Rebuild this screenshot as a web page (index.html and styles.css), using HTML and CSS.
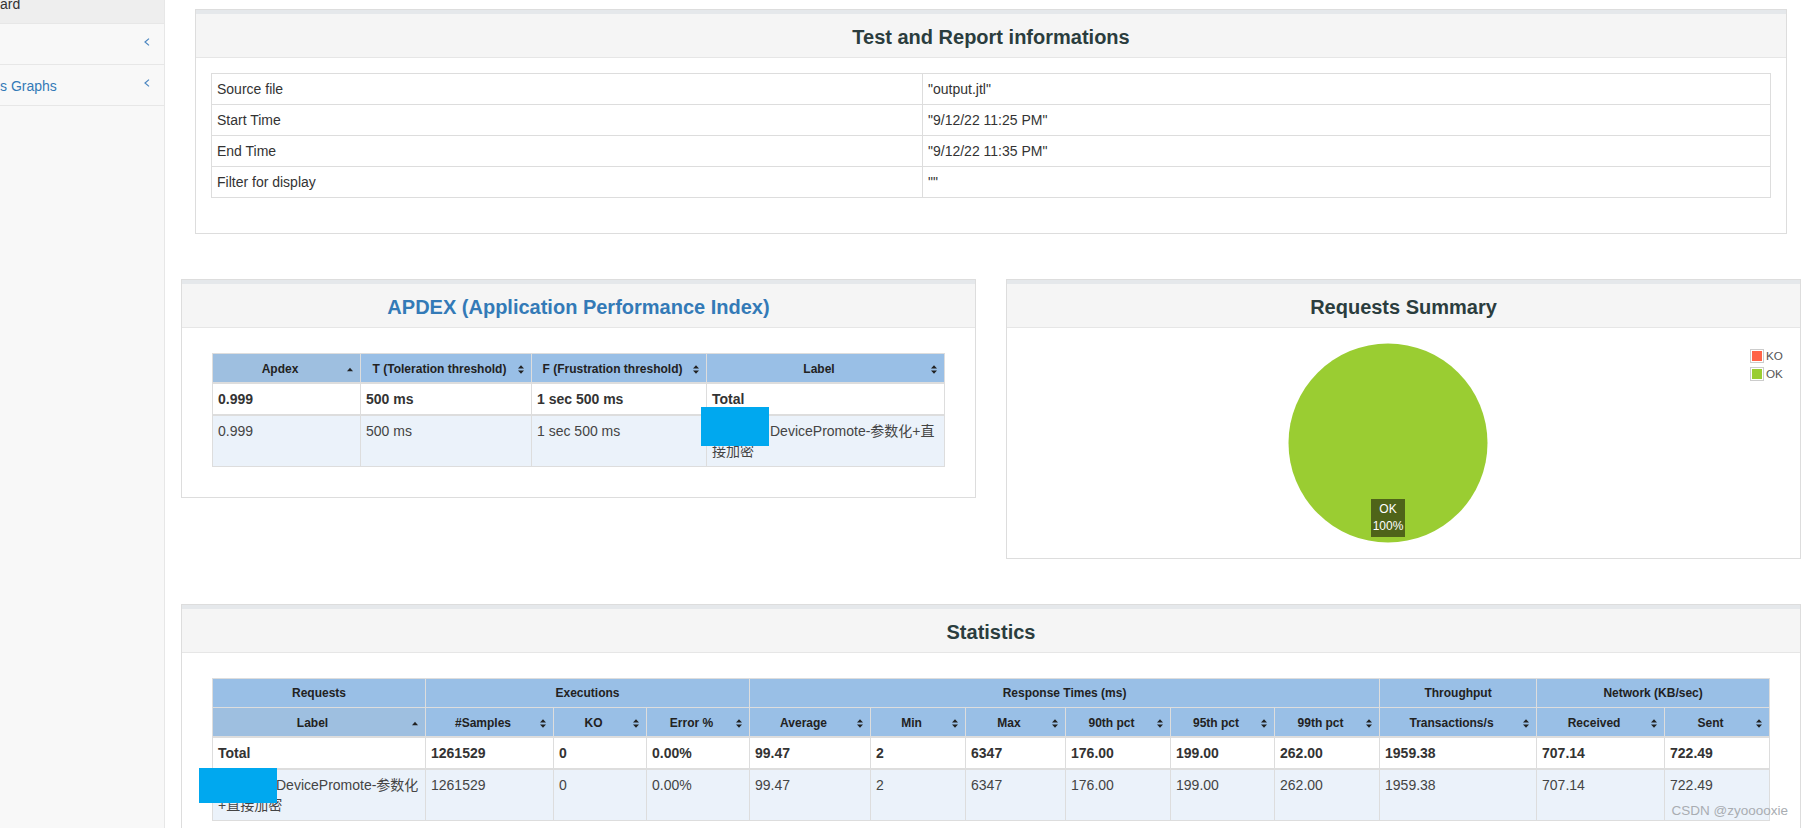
FILE: index.html
```html
<!DOCTYPE html>
<html lang="en">
<head>
<meta charset="utf-8">
<title>Apache JMeter Dashboard</title>
<link rel="stylesheet" href="styles.css">
</head>
<body>
<div class="wrapper">
  <nav class="sidebar">
    <ul class="side-nav">
      <li class="side-item active"><a class="side-link" href="#"><span class="side-text">ard</span></a></li>
      <li class="side-item"><a class="side-link" href="#"><span class="side-text"></span><svg class="chev" width="6" height="8" viewBox="0 0 6 8"><polyline points="5,0.6 1,4 5,7.4"/></svg></a></li>
      <li class="side-item"><a class="side-link" href="#"><span class="side-text">s Graphs</span><svg class="chev" width="6" height="8" viewBox="0 0 6 8"><polyline points="5,0.6 1,4 5,7.4"/></svg></a></li>
    </ul>
  </nav>

  <main class="page">
    <section class="panel panel-info">
      <div class="panel-heading"><h2 class="panel-title">Test and Report informations</h2></div>
      <div class="panel-body">
        <table class="tbl info">
          <colgroup><col class="ci-1"><col class="ci-2"></colgroup>
          <tbody>
            <tr><td>Source file</td><td>"output.jtl"</td></tr>
            <tr><td>Start Time</td><td>"9/12/22 11:25 PM"</td></tr>
            <tr><td>End Time</td><td>"9/12/22 11:35 PM"</td></tr>
            <tr><td>Filter for display</td><td>""</td></tr>
          </tbody>
        </table>
      </div>
    </section>

    <div class="row">
      <section class="panel panel-apdex">
        <div class="panel-heading"><h2 class="panel-title link">APDEX (Application Performance Index)</h2></div>
        <div class="panel-body">
          <table class="tbl apdex">
            <colgroup><col class="ca-1"><col class="ca-2"><col class="ca-3"><col class="ca-4"></colgroup>
            <thead>
              <tr>
                <th class="sorted"><div class="th-in"><span>Apdex</span><svg class="sort" width="6" height="9" viewBox="0 0 6 9"><path d="M0 6.2L3 2.8L6 6.2Z"/></svg></div></th>
                <th><div class="th-in"><span>T (Toleration threshold)</span><svg class="sort" width="6" height="9" viewBox="0 0 6 9"><path d="M0 3.6L3 0.2L6 3.6Z M0 5.4L6 5.4L3 8.8Z"/></svg></div></th>
                <th><div class="th-in"><span>F (Frustration threshold)</span><svg class="sort" width="6" height="9" viewBox="0 0 6 9"><path d="M0 3.6L3 0.2L6 3.6Z M0 5.4L6 5.4L3 8.8Z"/></svg></div></th>
                <th><div class="th-in"><span>Label</span><svg class="sort" width="6" height="9" viewBox="0 0 6 9"><path d="M0 3.6L3 0.2L6 3.6Z M0 5.4L6 5.4L3 8.8Z"/></svg></div></th>
              </tr>
            </thead>
            <tbody class="total">
              <tr><td>0.999</td><td>500 ms</td><td>1 sec 500 ms</td><td>Total</td></tr>
            </tbody>
            <tbody class="items">
              <tr><td>0.999</td><td>500 ms</td><td>1 sec 500 ms</td><td><span class="redact-slot"><span class="redact"></span></span>DevicePromote-参数化+直接加密</td></tr>
            </tbody>
          </table>
        </div>
      </section>

      <section class="panel panel-summary">
        <div class="panel-heading"><h2 class="panel-title">Requests Summary</h2></div>
        <div class="panel-body chart">
          <svg class="pie" width="793" height="230" viewBox="0 0 793 230"><circle cx="381" cy="115" r="99.5" fill="#9acd32"/></svg>
          <div class="pie-label">OK<br>100%</div>
          <div class="legend">
            <div class="legend-row"><span class="legend-box"><span class="legend-swatch ko"></span></span><span class="legend-text">KO</span></div>
            <div class="legend-row"><span class="legend-box"><span class="legend-swatch ok"></span></span><span class="legend-text">OK</span></div>
          </div>
        </div>
      </section>
    </div>

    <section class="panel panel-stats">
      <div class="panel-heading"><h2 class="panel-title">Statistics</h2></div>
      <div class="panel-body">
        <table class="tbl stats">
          <colgroup>
            <col class="cs-label"><col class="cs-samples"><col class="cs-ko"><col class="cs-err">
            <col class="cs-avg"><col class="cs-min"><col class="cs-max"><col class="cs-p90"><col class="cs-p95"><col class="cs-p99">
            <col class="cs-tps"><col class="cs-rec"><col class="cs-sent">
          </colgroup>
          <thead>
            <tr>
              <th class="grp">Requests</th>
              <th class="grp" colspan="3">Executions</th>
              <th class="grp" colspan="6">Response Times (ms)</th>
              <th class="grp">Throughput</th>
              <th class="grp" colspan="2">Network (KB/sec)</th>
            </tr>
            <tr>
              <th class="sorted"><div class="th-in"><span>Label</span><svg class="sort" width="6" height="9" viewBox="0 0 6 9"><path d="M0 6.2L3 2.8L6 6.2Z"/></svg></div></th>
              <th><div class="th-in"><span>#Samples</span><svg class="sort" width="6" height="9" viewBox="0 0 6 9"><path d="M0 3.6L3 0.2L6 3.6Z M0 5.4L6 5.4L3 8.8Z"/></svg></div></th>
              <th><div class="th-in"><span>KO</span><svg class="sort" width="6" height="9" viewBox="0 0 6 9"><path d="M0 3.6L3 0.2L6 3.6Z M0 5.4L6 5.4L3 8.8Z"/></svg></div></th>
              <th><div class="th-in"><span>Error %</span><svg class="sort" width="6" height="9" viewBox="0 0 6 9"><path d="M0 3.6L3 0.2L6 3.6Z M0 5.4L6 5.4L3 8.8Z"/></svg></div></th>
              <th><div class="th-in"><span>Average</span><svg class="sort" width="6" height="9" viewBox="0 0 6 9"><path d="M0 3.6L3 0.2L6 3.6Z M0 5.4L6 5.4L3 8.8Z"/></svg></div></th>
              <th><div class="th-in"><span>Min</span><svg class="sort" width="6" height="9" viewBox="0 0 6 9"><path d="M0 3.6L3 0.2L6 3.6Z M0 5.4L6 5.4L3 8.8Z"/></svg></div></th>
              <th><div class="th-in"><span>Max</span><svg class="sort" width="6" height="9" viewBox="0 0 6 9"><path d="M0 3.6L3 0.2L6 3.6Z M0 5.4L6 5.4L3 8.8Z"/></svg></div></th>
              <th><div class="th-in"><span>90th pct</span><svg class="sort" width="6" height="9" viewBox="0 0 6 9"><path d="M0 3.6L3 0.2L6 3.6Z M0 5.4L6 5.4L3 8.8Z"/></svg></div></th>
              <th><div class="th-in"><span>95th pct</span><svg class="sort" width="6" height="9" viewBox="0 0 6 9"><path d="M0 3.6L3 0.2L6 3.6Z M0 5.4L6 5.4L3 8.8Z"/></svg></div></th>
              <th><div class="th-in"><span>99th pct</span><svg class="sort" width="6" height="9" viewBox="0 0 6 9"><path d="M0 3.6L3 0.2L6 3.6Z M0 5.4L6 5.4L3 8.8Z"/></svg></div></th>
              <th><div class="th-in"><span>Transactions/s</span><svg class="sort" width="6" height="9" viewBox="0 0 6 9"><path d="M0 3.6L3 0.2L6 3.6Z M0 5.4L6 5.4L3 8.8Z"/></svg></div></th>
              <th><div class="th-in"><span>Received</span><svg class="sort" width="6" height="9" viewBox="0 0 6 9"><path d="M0 3.6L3 0.2L6 3.6Z M0 5.4L6 5.4L3 8.8Z"/></svg></div></th>
              <th><div class="th-in"><span>Sent</span><svg class="sort" width="6" height="9" viewBox="0 0 6 9"><path d="M0 3.6L3 0.2L6 3.6Z M0 5.4L6 5.4L3 8.8Z"/></svg></div></th>
            </tr>
          </thead>
          <tbody class="total">
            <tr><td>Total</td><td>1261529</td><td>0</td><td>0.00%</td><td>99.47</td><td>2</td><td>6347</td><td>176.00</td><td>199.00</td><td>262.00</td><td>1959.38</td><td>707.14</td><td>722.49</td></tr>
          </tbody>
          <tbody class="items">
            <tr><td><span class="redact-slot"><span class="redact"></span></span>DevicePromote-参数化+直接加密</td><td>1261529</td><td>0</td><td>0.00%</td><td>99.47</td><td>2</td><td>6347</td><td>176.00</td><td>199.00</td><td>262.00</td><td>1959.38</td><td>707.14</td><td>722.49</td></tr>
          </tbody>
        </table>
      </div>
    </section>
  </main>
</div>
<div class="watermark">CSDN @zyooooxie</div>
</body>
</html>
```

FILE: styles.css
```css
* { box-sizing: border-box; }

html, body { margin: 0; padding: 0; }

body {
  font-family: "Liberation Sans", Arial, "Noto Sans CJK SC", sans-serif;
  font-size: 14px;
  line-height: 20px;
  color: #333;
  background: #fff;
  width: 1805px;
  height: 828px;
  overflow: hidden;
  position: relative;
}

.wrapper { display: flex; height: 828px; }

/* sidebar */
.sidebar {
  flex: 0 0 165px;
  background: #f8f8f8;
  border-right: 1px solid #e7e7e7;
  overflow: hidden;
}
.side-nav { list-style: none; margin: -17px 0 0; padding: 0; }
.side-item { border-bottom: 1px solid #e7e7e7; }
.side-link {
  display: flex;
  align-items: center;
  justify-content: space-between;
  height: 40px;
  padding-top: 1px;
  padding-right: 14px;
  color: #337ab7;
  text-decoration: none;
  white-space: nowrap;
}
.side-item.active .side-link { background: #eee; color: #333; }
.chev { flex: none; margin-bottom: 6px; }
.chev polyline { fill: none; stroke: #4a85c0; stroke-width: 1.2; }

/* page */
.page { flex: 1; min-width: 0; }

.panel { background: #fff; border: 1px solid #ddd; }
.panel-heading {
  height: 48px;
  padding-top: 4px;
  border-top: 4px solid #e5e8eb;
  border-bottom: 1px solid #e6e6e6;
  background: #f5f5f5;
  text-align: center;
}
.panel-title {
  margin: 0;
  font-size: 20px;
  font-weight: bold;
  line-height: 39px;
  color: #2b3d3e;
}
.panel-title.link { color: #337ab7; }

.panel-info { margin: 9px 18px 0 30px; }
.panel-info .panel-body { padding: 15px; }
.panel-info .tbl { margin-bottom: 20px; }

.row {
  display: flex;
  align-items: flex-start;
  gap: 30px;
  margin: 45px 4px 0 16px;
}
.row .panel { flex: 1 1 0; min-width: 0; }

.panel-apdex .panel-body,
.panel-stats .panel-body { padding: 25px 30px 30px; }

.panel-stats { margin: 45px 4px 0 16px; }

/* tables */
.tbl {
  width: 100%;
  border-collapse: separate;
  border-spacing: 0;
  table-layout: fixed;
  border-top: 1px solid #ddd;
  border-left: 1px solid #ddd;
}
.tbl td, .tbl th {
  border-right: 1px solid #ddd;
  border-bottom: 1px solid #ddd;
  padding: 5px;
  text-align: left;
  vertical-align: top;
}
.tbl td { line-height: 20px; }
.tbl th {
  padding: 6px 7px 4px 5px;
  font-size: 12px;
  font-weight: bold;
  line-height: 18px;
  color: #222;
  background: #99bfe6;
  text-align: center;
  vertical-align: middle;
  white-space: nowrap;
}
.tbl th.grp { padding: 5px 5px 5px; }
.tbl th.sorted { background: #9ebfe0; }
.tbl thead tr:last-child th { border-bottom-width: 2px; }
.tbl tbody.total td { font-weight: bold; border-bottom-width: 2px; background: #fff; color: #333; }
.tbl tbody.items td { background: #ebf2fa; color: #444; }

.th-in {
  display: grid;
  grid-template-columns: 1fr auto;
  align-items: center;
  column-gap: 5px;
}
.sort { display: block; }
.sort path { fill: #222; }

.ci-1 { width: 711px; }
.ci-2 { width: 848px; }

.ca-1 { width: 148px; }
.ca-2 { width: 171px; }
.ca-3 { width: 175px; }
.ca-4 { width: 238px; }

.cs-label { width: 213px; }
.cs-samples { width: 128px; }
.cs-ko { width: 93px; }
.cs-err { width: 103px; }
.cs-avg { width: 121px; }
.cs-min { width: 95px; }
.cs-max { width: 100px; }
.cs-p90 { width: 105px; }
.cs-p95 { width: 104px; }
.cs-p99 { width: 105px; }
.cs-tps { width: 157px; }
.cs-rec { width: 128px; }
.cs-sent { width: 105px; }

/* redacted part of the label */
.redact-slot {
  display: inline-block;
  width: 58px;
  height: 20px;
  vertical-align: top;
  position: relative;
}
.redact { position: absolute; background: #00a8ef; }
.apdex .redact { left: -11px; top: -14px; width: 68px; height: 39px; }
.stats .redact { left: -19px; top: -7px; width: 78px; height: 35px; }

/* pie chart */
.chart { position: relative; height: 230px; padding: 0; }
.pie { display: block; }
.pie-label {
  position: absolute;
  left: 364px;
  top: 171px;
  width: 34px;
  padding: 2px 0;
  background: #4f6419;
  color: #fff;
  font-size: 12px;
  line-height: 17px;
  text-align: center;
}
.legend {
  position: absolute;
  left: 743px;
  top: 19px;
  font-size: 11.7px;
  line-height: 18px;
  color: #545454;
}
.legend-row { display: flex; align-items: center; height: 18px; }
.legend-box {
  display: block;
  border: 1px solid #ccc;
  padding: 1px;
  background: #fff;
}
.legend-swatch { display: block; width: 10px; height: 10px; }
.legend-swatch.ko { background: #ff6347; }
.legend-swatch.ok { background: #9acd32; }
.legend-text { padding-left: 2px; }

.watermark {
  position: absolute;
  right: 17px;
  bottom: 7px;
  font-size: 13.5px;
  line-height: 20px;
  color: #a9adb2;
  white-space: nowrap;
}
```
